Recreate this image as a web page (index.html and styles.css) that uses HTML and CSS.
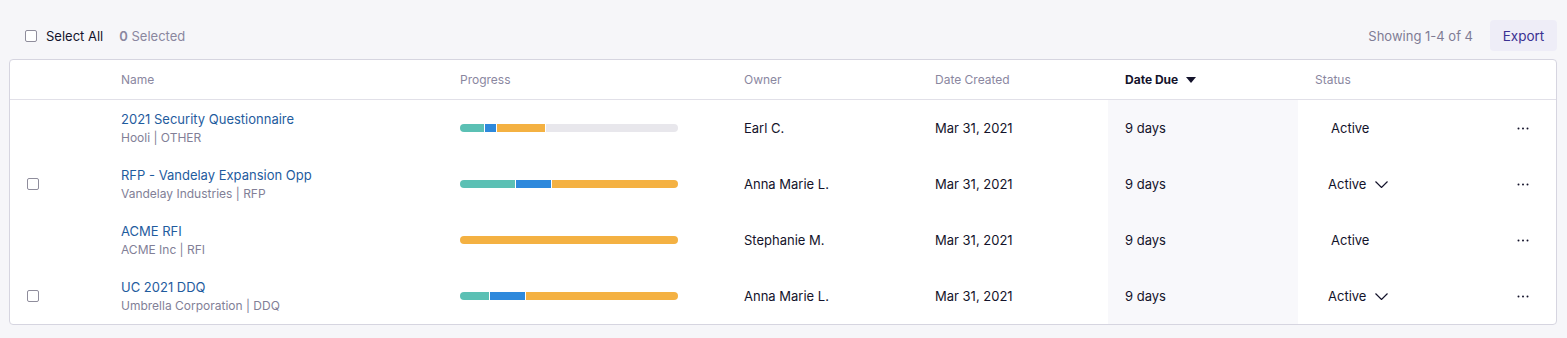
FILE: index.html
```html
<!DOCTYPE html>
<html lang="en">
<head>
  <meta charset="UTF-8" />
  <title>Projects</title>
  <link rel="stylesheet" href="styles.css">
</head>
<body>
  <div class="toolbar">
    <label class="select-all"><span class="box"></span>Select All</label>
    <span class="selected"><b>0</b> Selected</span>
    <span class="spacer"></span>
    <span class="showing">Showing 1-4 of 4</span>
    <button class="export">Export</button>
  </div>

  <div class="table">
    <div class="row head">
      <div class="cell"></div>
      <div class="cell">Name</div>
      <div class="cell">Progress</div>
      <div class="cell">Owner</div>
      <div class="cell">Date Created</div>
      <div class="cell sorted">Date Due <svg width="10" height="6" viewBox="0 0 10 6"><path d="M0 0h10L5 6z" fill="#14132b"/></svg></div>
      <div class="cell">Status</div>
      <div class="cell"></div>
    </div>

    <div class="row">
      <div class="cell"></div>
      <div class="cell name"><a href="#">2021 Security Questionnaire</a><span>Hooli | OTHER</span></div>
      <div class="cell"><div class="bar"><i class="teal" style="width:24px"></i><i class="blue" style="width:11px"></i><i class="orange" style="width:48px"></i><i class="rest"></i></div></div>
      <div class="cell">Earl C.</div>
      <div class="cell">Mar 31, 2021</div>
      <div class="cell due">9 days</div>
      <div class="cell"><span class="status">Active</span></div>
      <div class="cell more"><svg width="12" height="3" viewBox="0 0 12 3"><circle cx="1.5" cy="1.5" r="1"/><circle cx="6" cy="1.5" r="1"/><circle cx="10.5" cy="1.5" r="1"/></svg></div>
    </div>

    <div class="row">
      <div class="cell"><span class="box"></span></div>
      <div class="cell name"><a href="#">RFP - Vandelay Expansion Opp</a><span>Vandelay Industries | RFP</span></div>
      <div class="cell"><div class="bar"><i class="teal" style="width:55px"></i><i class="blue" style="width:35px"></i><i class="orange rest"></i></div></div>
      <div class="cell">Anna Marie L.</div>
      <div class="cell">Mar 31, 2021</div>
      <div class="cell due">9 days</div>
      <div class="cell"><span class="status drop">Active <svg width="13" height="7" viewBox="0 0 13 7"><path d="M0.5 0.5l6 6 6-6" fill="none" stroke="#14132b" stroke-width="1.2"/></svg></span></div>
      <div class="cell more"><svg width="12" height="3" viewBox="0 0 12 3"><circle cx="1.5" cy="1.5" r="1"/><circle cx="6" cy="1.5" r="1"/><circle cx="10.5" cy="1.5" r="1"/></svg></div>
    </div>

    <div class="row">
      <div class="cell"></div>
      <div class="cell name"><a href="#">ACME RFI</a><span>ACME Inc | RFI</span></div>
      <div class="cell"><div class="bar"><i class="orange rest"></i></div></div>
      <div class="cell">Stephanie M.</div>
      <div class="cell">Mar 31, 2021</div>
      <div class="cell due">9 days</div>
      <div class="cell"><span class="status">Active</span></div>
      <div class="cell more"><svg width="12" height="3" viewBox="0 0 12 3"><circle cx="1.5" cy="1.5" r="1"/><circle cx="6" cy="1.5" r="1"/><circle cx="10.5" cy="1.5" r="1"/></svg></div>
    </div>

    <div class="row">
      <div class="cell"><span class="box"></span></div>
      <div class="cell name"><a href="#">UC 2021 DDQ</a><span>Umbrella Corporation | DDQ</span></div>
      <div class="cell"><div class="bar"><i class="teal" style="width:29px"></i><i class="blue" style="width:35px"></i><i class="orange rest"></i></div></div>
      <div class="cell">Anna Marie L.</div>
      <div class="cell">Mar 31, 2021</div>
      <div class="cell due">9 days</div>
      <div class="cell"><span class="status drop">Active <svg width="13" height="7" viewBox="0 0 13 7"><path d="M0.5 0.5l6 6 6-6" fill="none" stroke="#14132b" stroke-width="1.2"/></svg></span></div>
      <div class="cell more"><svg width="12" height="3" viewBox="0 0 12 3"><circle cx="1.5" cy="1.5" r="1"/><circle cx="6" cy="1.5" r="1"/><circle cx="10.5" cy="1.5" r="1"/></svg></div>
    </div>
  </div>
</body>
</html>
```

FILE: styles.css
```css
body {
  margin: 0;
  padding: 20px 10px 0 9px;
  background: #f6f6f9;
  color: #14132b;
  font-family: Inter, "Liberation Sans", sans-serif;
  font-size: 13px;
}
.toolbar {
  display: flex;
  align-items: center;
  height: 31px;
  margin-bottom: 8px;
  padding-left: 16px;
}
.box {
  display: inline-block;
  width: 10px;
  height: 10px;
  border: 1px solid #8f8d9c;
  border-radius: 2px;
  background: #fff;
}
.select-all {
  display: flex;
  align-items: center;
  gap: 9px;
  color: #14132b;
}
.selected {
  margin-left: 16px;
  color: #8a879f;
}
.selected b {
  font-weight: 600;
}
.spacer {
  flex: 1;
}
.showing {
  color: #7f7c95;
  margin-right: 17px;
}
.export {
  height: 31px;
  width: 67px;
  border: none;
  border-radius: 4px;
  background: #eeedf7;
  color: #3b3192;
  font-family: inherit;
  font-size: 13.5px;
}
.table {
  background: #fff;
  border: 1px solid #d6d5e0;
  border-radius: 4px;
  overflow: hidden;
}
.row {
  display: grid;
  grid-template-columns: 94px 339px 284px 191px 190px 190px 190px 1fr;
  height: 56px;
}
.row.head {
  height: 39px;
  border-bottom: 1px solid #e1e0e8;
  color: #8a879f;
  font-size: 12px;
}
.cell {
  display: flex;
  align-items: center;
  padding-left: 17px;
}
.head .sorted {
  color: #14132b;
  font-weight: 700;
  gap: 8px;
}
.due {
  background: #f8f8fb;
}
.name {
  flex-direction: column;
  align-items: flex-start;
  justify-content: center;
  gap: 2px;
}
.name a {
  color: #1f5c9e;
  text-decoration: none;
  font-size: 13px;
  line-height: 17px;
}
.name span {
  color: #827f97;
  font-size: 12px;
  line-height: 16px;
}
.bar {
  display: flex;
  gap: 1px;
  width: 218px;
  height: 8px;
  border-radius: 4px;
  overflow: hidden;
}
.bar i {
  display: block;
  height: 100%;
}
.bar .rest {
  flex: 1;
  background: #e8e7ec;
}
.bar .teal { background: #5bc0b4; }
.bar .blue { background: #2e89dc; }
.bar .orange { background: #f4b142; }
.status {
  padding-left: 16px;
}
.status.drop {
  padding-left: 13px;
  display: flex;
  align-items: center;
  gap: 9px;
}
.more {
  padding-left: 29px;
}
.more svg {
  fill: #14132b;
}
```
